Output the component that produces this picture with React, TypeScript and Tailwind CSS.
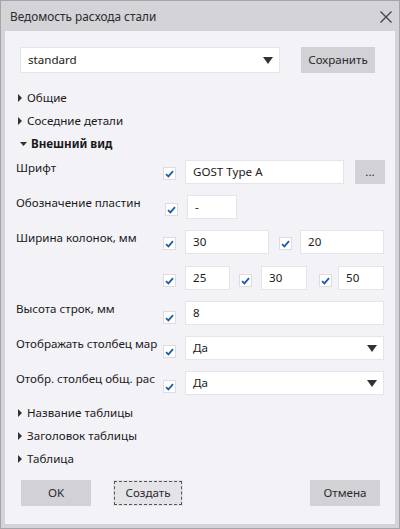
import { ReactNode } from 'react';

const font = { fontFamily: '"Noto Sans", "Open Sans", sans-serif' };

function Caret({ open }: { open?: boolean }) {
  if (open) {
    return (
      <svg width="7" height="4" viewBox="0 0 7 4" className="mr-[4px] ml-[2px]">
        <path d="M0 0 L7 0 L3.5 4 Z" fill="#333" />
      </svg>
    );
  }
  return (
    <svg width="4" height="8" viewBox="0 0 4 8" className="mr-[5px]">
      <path d="M0 0 L4 4 L0 8 Z" fill="#333" />
    </svg>
  );
}

function Section({ title, open }: { title: string; open?: boolean }) {
  return (
    <div className="flex h-[23px] items-center pl-[13px]">
      <Caret open={open} />
      <span className={open ? 'font-bold text-[#1a1a1a]' : 'text-[#1a1a1a]'}>{title}</span>
    </div>
  );
}

// top offset of the box relative to the neighbouring field
function Check({ className = '' }: { className?: string }) {
  return (
    <div
      className={`flex h-[13px] w-[13px] shrink-0 items-center justify-center border border-[#dcdce2] bg-white ${className}`}
    >
      <svg width="9" height="8" viewBox="0 0 9 8">
        <path d="M1 4.2 L3.4 6.4 L8 1.2" fill="none" stroke="#1b5fa3" strokeWidth="1.8" />
      </svg>
    </div>
  );
}

function Field({ value, className }: { value: string; className: string }) {
  return (
    <div className={`flex shrink-0 items-center border border-[#e4e4ea] bg-white pl-[7px] text-[#1a1a1a] ${className}`}>
      {value}
    </div>
  );
}

function Dropdown({ value, className }: { value: string; className: string }) {
  return (
    <div
      className={`flex shrink-0 items-center justify-between border border-[#e4e4ea] bg-white pr-[6px] pl-[7px] text-[#1a1a1a] ${className}`}
    >
      <span>{value}</span>
      <svg width="10" height="7" viewBox="0 0 10 7">
        <path d="M0 0 L10 0 L5 7 Z" fill="#333" />
      </svg>
    </div>
  );
}

function Row({ label, children, className = '' }: { label: string; children: ReactNode; className?: string }) {
  return (
    <div className={`flex items-start ${className}`}>
      <div className="w-[140px] shrink-0 pl-[1px] leading-[16px] whitespace-nowrap text-[#1a1a1a]">{label}</div>
      <div className="ml-[8px] flex items-start">{children}</div>
    </div>
  );
}

export default function App() {
  return (
    <div
      className="flex h-[529px] w-[400px] flex-col border border-[#a4a4aa] bg-[#d3d3d8] text-[11.6px]"
      style={font}
    >
      {/* title bar */}
      <div className="flex h-[30px] shrink-0 items-center justify-between pt-[2px] pr-[7px] pl-[9px]">
        <span className="text-[11.8px] text-[#2b2b2b]">Ведомость расхода стали</span>
        <svg width="12" height="12" viewBox="0 0 12 12">
          <path d="M0.5 0.5 L11.5 11.5 M11.5 0.5 L0.5 11.5" stroke="#444" strokeWidth="1.3" />
        </svg>
      </div>

      {/* body */}
      <div className="mx-[4px] mb-[4px] flex-1 bg-[#f2f2f7] pt-[16px]">
        <div className="flex h-[26px] pl-[15px]">
          <Dropdown value="standard" className="h-[26px] w-[260px]" />
          <button className="ml-[21px] h-[26px] w-[74px] bg-[#d1d1d6] text-[#2b2b2b]">Сохранить</button>
        </div>

        <div className="mt-[13px]">
          <Section title="Общие" />
          <Section title="Соседние детали" />
          <Section title="Внешний вид" open />
        </div>

        <div className="mt-[5px] pl-[10px]">
          <Row label="Шрифт">
            <Check className="mt-[7px]" />
            <Field value="GOST Type A" className="ml-[9px] h-[24px] w-[159px]" />
            <button className="ml-[11px] h-[24px] w-[30px] bg-[#d1d1d6] text-[#2b2b2b]">...</button>
          </Row>

          <Row label="Обозначение пластин" className="mt-[11px]">
            <Check className="mt-[8px] ml-[2px]" />
            <Field value="-" className="ml-[9px] h-[24px] w-[50px]" />
          </Row>

          <Row label="Ширина колонок, мм" className="mt-[11px]">
            <Check className="mt-[7px]" />
            <Field value="30" className="ml-[9px] h-[24px] w-[84px]" />
            <Check className="mt-[7px] ml-[10px]" />
            <Field value="20" className="ml-[8px] h-[24px] w-[84px]" />
          </Row>

          <Row label="" className="mt-[12px]">
            <Check className="mt-[8px]" />
            <Field value="25" className="ml-[9px] h-[24px] w-[45px]" />
            <Check className="mt-[8px] ml-[9px]" />
            <Field value="30" className="ml-[9px] h-[24px] w-[46px]" />
            <Check className="mt-[8px] ml-[12px]" />
            <Field value="50" className="ml-[6px] h-[24px] w-[46px]" />
          </Row>

          <Row label="Высота строк, мм" className="mt-[11px]">
            <Check className="mt-[10px]" />
            <Field value="8" className="ml-[9px] h-[24px] w-[199px]" />
          </Row>

          <Row label="Отображать столбец мар" className="mt-[11px]">
            <Check className="mt-[9px]" />
            <Dropdown value="Да" className="ml-[9px] h-[24px] w-[199px]" />
          </Row>

          <Row label="Отобр. столбец общ. рас" className="mt-[11px]">
            <Check className="mt-[9px]" />
            <Dropdown value="Да" className="ml-[9px] h-[24px] w-[199px]" />
          </Row>
        </div>

        <div className="mt-[6px]">
          <Section title="Название таблицы" />
          <Section title="Заголовок таблицы" />
          <Section title="Таблица" />
        </div>

        <div className="mt-[10px] flex pl-[16px]">
          <button className="h-[26px] w-[70px] bg-[#d1d1d6] text-[#2b2b2b]">OK</button>
          <button className="ml-[22px] h-[26px] w-[70px] bg-[#e3e3e8] p-[1px] text-[#2b2b2b]">
            <div className="flex h-full w-full items-center justify-center border border-dashed border-[#555]">
              Создать
            </div>
          </button>
          <button className="mr-[15px] ml-auto h-[26px] w-[70px] bg-[#d1d1d6] text-[#2b2b2b]">Отмена</button>
        </div>
      </div>
    </div>
  );
}
